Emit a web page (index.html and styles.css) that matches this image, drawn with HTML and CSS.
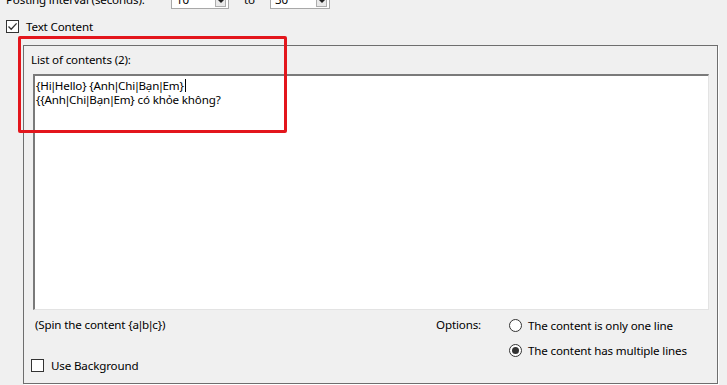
FILE: index.html
```html
<!DOCTYPE html>
<html lang="en">
<head>
	<meta charset="utf-8" />
	<title>Text Content</title>
	<link rel="stylesheet" href="styles.css">
</head>
<body>
	<div class="page">
		<div class="interval-row">
			<span class="interval-label">Posting interval (seconds):</span>
			<span class="spin spin-from"><span class="spin-value">10</span><span class="spin-btn"></span></span>
			<span class="interval-to">to</span>
			<span class="spin spin-to"><span class="spin-value">30</span><span class="spin-btn"></span></span>
		</div>

		<label class="check-row">
			<span class="checkbox checked">
				<svg width="11" height="11" viewBox="0 0 11 11"><path d="M1.5 5.5 L4.2 8.3 L9.6 2.4" fill="none" stroke="#333" stroke-width="1.3"/></svg>
			</span>
			<span>Text Content</span>
		</label>

		<div class="group">
			<div class="group-label">List of contents (2):</div>
			<div class="editor">
				<div>{Hi<i>|</i>Hello} {Anh<i>|</i>Chi<i>|</i>Bạn<i>|</i>Em}<span class="caret"></span></div>
				<div>{{Anh<i>|</i>Chi<i>|</i>Bạn<i>|</i>Em} có khỏe không?</div>
			</div>
			<div class="group-footer">
				<div class="footer-left">
					<div class="spin-hint">(Spin the content {a<i>|</i>b<i>|</i>c})</div>
					<label class="check-row small">
						<span class="checkbox"></span>
						<span>Use Background</span>
					</label>
				</div>
				<div class="options-label">Options:</div>
				<div class="options">
					<label class="radio-row"><span class="radio"></span><span>The content is only one line</span></label>
					<label class="radio-row"><span class="radio selected"></span><span>The content has multiple lines</span></label>
				</div>
			</div>
		</div>

		<div class="highlight"></div>
	</div>
</body>
</html>
```

FILE: styles.css
```css
html, body {
	margin:0;
	background:#f0f0f0;
}
body {
	font-family:"Noto Sans", "Open Sans", sans-serif;
	font-size:11.6px;
	letter-spacing:-0.15px;
	color:#000;
	overflow:hidden;
	width:727px;
	height:385px;
}
.page {
	position:relative;
	display:flow-root;
	padding-left:6px;
}
/* pipes are narrow in the original font */
i {
	font-style:normal;
	margin:0 -1.5px;
}
/*-------------------*/
.interval-row {
	display:flex;
	align-items:center;
	height:21px;
	margin-top:-11px;
}
.interval-label {
	width:165px;
}
.spin {
	display:flex;
	align-items:center;
	justify-content:space-between;
	height:19px;
	background:#fff;
	border:1px solid #a8a8a8;
	box-sizing:border-box;
	padding:0 2px 0 4px;
}
.spin-from {
	width:58px;
}
.spin-to {
	width:60px;
}
.interval-to {
	width:41px;
	text-align:center;
}
.spin-btn {
	width:11px;
	height:15px;
	border:1px solid #adadad;
	background:#e9e9e9;
	box-sizing:border-box;
	position:relative;
}
.spin-btn::after {
	content:"";
	position:absolute;
	left:2px;
	bottom:3px;
	border-left:3px solid transparent;
	border-right:3px solid transparent;
	border-top:3px solid #222;
}
/*-------------------*/
.check-row {
	display:flex;
	align-items:center;
	gap:7px;
	height:17px;
	margin-top:8px;
}
.checkbox {
	width:13px;
	height:13px;
	box-sizing:border-box;
	border:1px solid #333;
	background:#fff;
	display:flex;
	align-items:center;
	justify-content:center;
}
/*-------------------*/
.group {
	margin:10px 0 0 17px;
	width:695px;
	height:339px;
	box-sizing:border-box;
	border:1px solid #6e6e6e;
	box-shadow:1px 1px 0 #fff;
	padding:6px 0 0 7px;
	display:flex;
	flex-direction:column;
}
.group-label {
	line-height:16px;
}
.editor {
	margin:6px 0 0 2px;
	width:676px;
	height:236px;
	box-sizing:border-box;
	background:#fff;
	border-style:solid;
	border-width:2px 1px 1px 2px;
	border-color:#7a7a7a #e3e3e3 #e3e3e3 #7a7a7a;
	padding:3px 0 0 1px;
	line-height:14px;
}
.caret {
	display:inline-block;
	width:1px;
	height:13px;
	margin-left:1px;
	background:#000;
	vertical-align:-2px;
}
/*-------------------*/
.group-footer {
	flex:1;
	display:grid;
	grid-template-columns:405px 73px auto;
	padding-bottom:9px;
}
.footer-left {
	display:flex;
	flex-direction:column;
	justify-content:space-between;
}
.spin-hint {
	margin:7px 0 0 4px;
	line-height:15px;
}
.check-row.small {
	margin-top:0;
}
.options-label {
	margin-top:7px;
	line-height:15px;
}
.options {
	display:flex;
	flex-direction:column;
	gap:8px;
	margin-top:7px;
}
.radio-row {
	display:flex;
	align-items:center;
	gap:6px;
	height:17px;
}
.radio {
	width:13px;
	height:13px;
	box-sizing:border-box;
	border:1px solid #333;
	border-radius:50%;
	background:#fff;
	position:relative;
}
.radio.selected::after {
	content:"";
	position:absolute;
	left:2px;
	top:2px;
	width:7px;
	height:7px;
	border-radius:50%;
	background:#333;
}
/*-------------------*/
.highlight {
	position:absolute;
	left:18px;
	top:36px;
	width:269px;
	height:97px;
	box-sizing:border-box;
	border:3px solid #e3161c;
	border-radius:2px;
}
```
